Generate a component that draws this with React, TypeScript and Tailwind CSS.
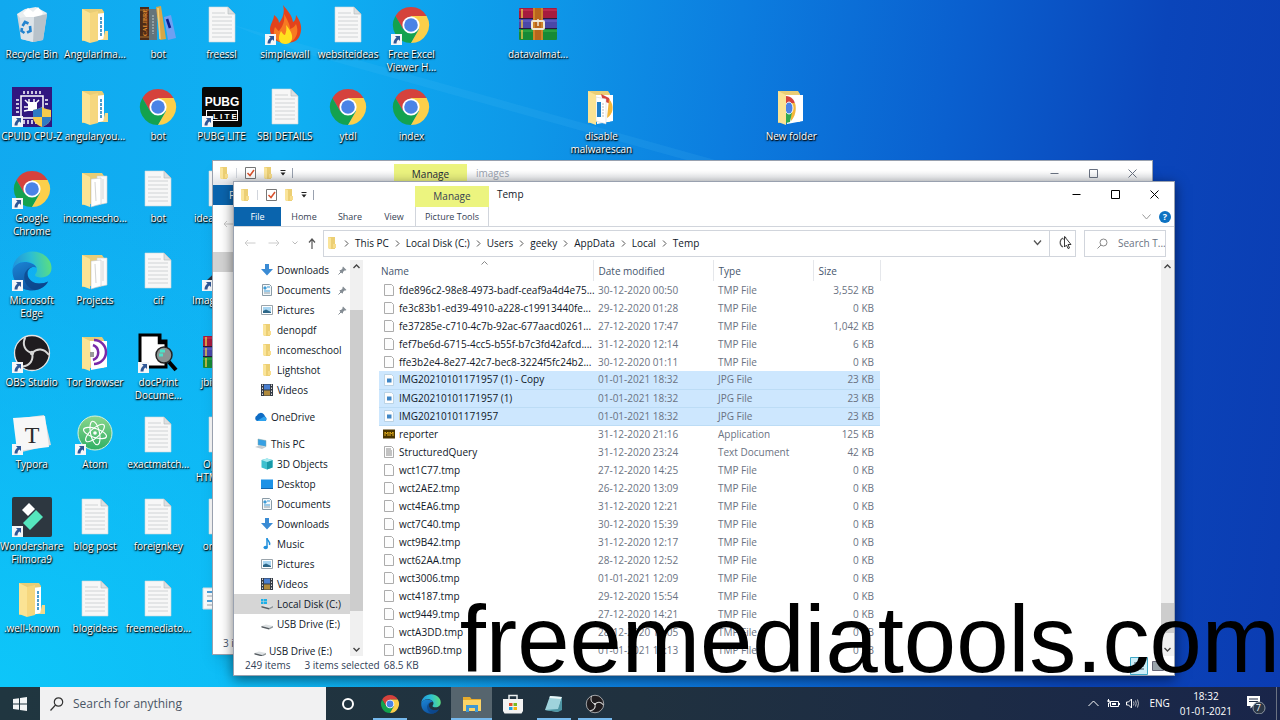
import React from 'react';
import clsx from 'clsx';

type IconProps = { className?: string };

/* ---------- app logos ---------- */

const ChromeIcon: React.FC<IconProps> = ({ className = 'size-10' }) => (
  <svg viewBox="0 0 40 40" className={className}>
    <path d="M4.4 11A18 18 0 0 1 35.6 11H20L12.2 24.5Z" fill="#d5423c" />
    <path d="M4.4 11A18 18 0 0 0 20 38L27.8 24.5H12.2Z" fill="#13a24f" />
    <path d="M35.6 11A18 18 0 0 1 20 38L27.8 24.5L20 11Z" fill="#fccf4a" />
    <circle cx="20" cy="20" r="8.6" fill="#fff" />
    <circle cx="20" cy="20" r="6.8" fill="#4b83e6" />
  </svg>
);

const EdgeIcon: React.FC<IconProps> = ({ className = 'size-10' }) => (
  <svg viewBox="0 0 40 40" className={className}>
    <defs>
      <linearGradient id="edgeTop" x1="0" y1="0.4" x2="1" y2="0.3">
        <stop offset="0" stopColor="#1f93dc" />
        <stop offset="0.5" stopColor="#2cbfd3" />
        <stop offset="1" stopColor="#5fe07a" />
      </linearGradient>
      <linearGradient id="edgeBase" x1="0" y1="0" x2="0.6" y2="1">
        <stop offset="0" stopColor="#1c86d6" />
        <stop offset="1" stopColor="#0d4f9c" />
      </linearGradient>
    </defs>
    <path d="M0.5 19C1 8 10 0.5 20.5 0.5C31 0.5 39.5 8 39.5 17C39.5 23 35 26.5 29.5 26.5C25.5 26.5 23 25.5 23 24C23 22.8 25 22 25 18.5C25 14.5 20 10.5 13.5 10.5C7 10.5 2 14 0.5 19Z" fill="url(#edgeTop)" />
    <path d="M0.5 19C2 14 7 11 12.5 11C18 11 23.5 13.5 24.5 17C22 14.5 15.5 17 15.5 22.5C15.5 28 20.5 32.5 27 32.5C31 32.5 34 31.5 36 30.5C33 36 27 39.5 20 39.5C9 39.5 0 31 0.5 19Z" fill="url(#edgeBase)" />
    <path d="M15.5 22.5C15.5 28 20.5 32.5 27 32.5C31 32.5 34 31.5 36 30.5C34 35 29 38.5 23 39.3C15 37 11 30 12.5 23.5C13.5 19.5 17 16.5 20.5 15.8C17.5 17 15.5 19 15.5 22.5Z" fill="#0b4386" opacity="0.7" />
  </svg>
);

const ObsIcon: React.FC<IconProps> = ({ className = 'size-10' }) => (
  <svg viewBox="0 0 40 40" className={className}>
    <circle cx="20" cy="20" r="17.5" fill="#1f1c1f" stroke="#e4e4e4" strokeWidth="1.3" />
    <g fill="none" stroke="#d8d8d8" strokeWidth="2" strokeLinecap="round">
      <path d="M20 20C13 18 10 12 13 5" />
      <path d="M20 20C13 18 10 12 13 5" transform="rotate(120 20 20)" />
      <path d="M20 20C13 18 10 12 13 5" transform="rotate(240 20 20)" />
    </g>
    <circle cx="20" cy="20" r="2.2" fill="#d8d8d8" />
  </svg>
);

const RecycleBinIcon = () => (
  <svg viewBox="0 0 40 40" className="size-10">
    <path d="M5 9L35 9L31 35L21 37L9 34Z" fill="#cfd6dc" />
    <path d="M5 9L13 4L24 2L35 8L33 13L22 12L8 13Z" fill="#e9edef" />
    <path d="M11 8L16 3L21 7L26 2L31 8L28 12L14 12Z" fill="#fff" />
    <path d="M22 12L35 9L31 35L21 37Z" fill="#b8c2ca" />
    <path d="M8 13L22 12L21 37L9 34Z" fill="#dde4e9" />
    <g fill="none" stroke="#2384cf" strokeWidth="2.6">
      <path d="M10.5 21L13 17L16.5 18.5" />
      <path d="M18 21L18.5 26L15 27.5" />
      <path d="M12.5 28L9.5 26L10 23" />
    </g>
  </svg>
);

const CalibreIcon = () => (
  <svg viewBox="0 0 40 40" className="size-10">
    <path d="M2 2H11V35H2Z" fill="#4d2b18" />
    <path d="M2 5H11M2 32H11" stroke="#a9712d" />
    <text transform="translate(9 31) rotate(-90)" fontSize="6" fontWeight="700" fill="#e89030" className="font-['Liberation_Serif',serif]">CALIBRE</text>
    <path d="M11 4H19V35H11Z" fill="#64747b" />
    <path d="M15 10V29" stroke="#b9c8cc" strokeDasharray="2 1" />
    <path d="M18 2L23 1L28 34L22 35Z" fill="#d8a747" />
    <path d="M20 3L22 34" stroke="#f1cf7e" strokeWidth="1.5" />
    <path d="M26 12L33 10L38 33L30 35Z" fill="#6fa0f2" />
    <path d="M29 14L32 23" stroke="#0a1f8f" strokeWidth="2.6" />
  </svg>
);

const FlameIcon = () => (
  <svg viewBox="0 0 40 40" className="size-10">
    <path d="M18 0C22 5 27 10 28 17C30 16 31 13 31 10C35 16 38 22 35 30C33 36 28 38 21 38C11 38 5 32 5 24C5 19 9 15 9 10C12 12 14 15 14 18C18 13 20 7 18 0Z" fill="#e2431c" />
    <path d="M19 9C23 16 25 20 25 24C28 23 30 21 31 19C34 26 32 34 25 37H15C8 33 8 27 10 22C12 24 13 26 14 26C18 21 20 16 19 9Z" fill="#f77a22" />
    <path d="M21 20C25 25 28 29 27 34C26 38 23 39 20 39C16 39 14 36 14 33C14 30 15 28 16 26C18 29 19 30 20 30C21 27 22 24 21 20Z" fill="#ffe11f" />
  </svg>
);

const CpuzIcon = () => (
  <svg viewBox="0 0 40 40" className="size-10">
    <path d="M0 0H40V40H0Z" fill="#31177f" />
    <g stroke="#fff" fill="none" strokeWidth="1.5">
      <path d="M9 9H31V31H9Z" />
      <path d="M12 4V7M16 4V7M20 4V7M24 4V7M28 4V7M4 13H7M4 17H7M4 21H7M4 25H7M33 13H36M33 17H36M12 33V37M16 33V37M20 33V37M24 33V37" />
      <path d="M13 13L17 17M17 12V16M22 12V16M12 20H16M12 24L17 23M27 13L24 16" />
    </g>
    <path d="M16 15H25V24H16Z" fill="#fff" />
    <path d="M30 20C33 22 36 22 39 23V30C39 35 35 38 30 40C25 38 21 35 21 30V23C24 22 27 22 30 20Z" fill="#f6cb4d" />
    <path d="M30 20V30H21V23C24 22 27 22 30 20ZM30 30H39C39 35 35 38 30 40Z" fill="#2f7bc4" />
  </svg>
);

const PubgIcon = () => (
  <svg viewBox="0 0 40 40" className="size-10">
    <rect width="40" height="40" rx="2" fill="#080808" />
    <g fill="#fff" fontWeight="700" textAnchor="middle" className="font-['Liberation_Sans',sans-serif]">
      <text x="20" y="19" fontSize="12">PUBG</text>
      <text x="23" y="32" fontSize="8">L I T E</text>
    </g>
    <rect x="4.5" y="23.5" width="31" height="10" fill="none" stroke="#fff" />
  </svg>
);

const WinrarIcon = () => (
  <svg viewBox="0 0 40 40" className="size-10">
    <rect x="1" y="3" width="38" height="11" rx="1" fill="#a61b3e" />
    <rect x="1" y="14" width="38" height="10" rx="1" fill="#4a48a8" />
    <rect x="1" y="24" width="38" height="11" rx="1" fill="#178a35" />
    <path d="M1 5H39" stroke="#d03a5c" />
    <path d="M1 13.5H39M1 23.5H39" stroke="#2a1a3a" />
    <path d="M1 16H39" stroke="#6c6bd0" />
    <path d="M1 26H39" stroke="#3fb84c" />
    <path d="M4 4V13M4 15V23M4 25V34" stroke="#e8c24a" strokeWidth="1.5" />
    <path d="M15 3H25V35H15Z" fill="#b9661c" />
    <path d="M16 3V35M24 3V35" stroke="#d8902f" strokeWidth="1.5" />
    <rect x="14" y="16" width="12" height="8" rx="1" fill="none" stroke="#f0ead6" strokeWidth="2" />
    <path d="M20 14V21" stroke="#f0ead6" strokeWidth="1.5" />
  </svg>
);

const TyporaIcon = () => (
  <svg viewBox="0 0 40 40" className="size-10">
    <path d="M2 4L32 0L39 30L10 37Z" fill="#dadada" />
    <path d="M1 3L33 1L37 32L5 36Z" fill="#f7f7f7" />
    <text x="20" y="28" textAnchor="middle" fontSize="24" fill="#2b2b2b" className="font-['Liberation_Serif',serif]">T</text>
  </svg>
);

const AtomIcon = () => (
  <svg viewBox="0 0 40 40" className="size-10">
    <defs>
      <linearGradient id="atomBg" x1="0" y1="0" x2="0" y2="1">
        <stop offset="0" stopColor="#8ad68c" />
        <stop offset="1" stopColor="#2fb064" />
      </linearGradient>
    </defs>
    <circle cx="20" cy="18" r="17" fill="url(#atomBg)" stroke="#d7f3dc" />
    <g fill="none" stroke="#fff" strokeWidth="1.1">
      <ellipse cx="20" cy="18" rx="4.5" ry="12" transform="rotate(-12 20 18)" />
      <ellipse cx="20" cy="18" rx="4.5" ry="12" transform="rotate(48 20 18)" />
      <ellipse cx="20" cy="18" rx="4.5" ry="12" transform="rotate(108 20 18)" />
    </g>
    <circle cx="20" cy="18" r="1.8" fill="#fff" />
  </svg>
);

const FilmoraIcon = () => (
  <svg viewBox="0 0 40 40" className="size-10">
    <rect width="40" height="40" rx="2" fill="#2d3740" />
    <path d="M17 6L23 12L16 19L10 13Z" fill="#fff" />
    <path d="M24 13L31 20L18 33L11 26Z" fill="#55e6bd" />
  </svg>
);

const DocPrintIcon = () => (
  <svg viewBox="0 0 40 40" className="size-10">
    <path d="M2 2H22V8H28V34H2Z" fill="#fff" stroke="#000" strokeWidth="3" />
    <path d="M21 3V10H28" fill="none" stroke="#000" strokeWidth="2.5" />
    <circle cx="26" cy="22" r="8" fill="#8b9494" stroke="#222" strokeWidth="1.5" />
    <path d="M22 18H27M21 22H25" stroke="#4fe0c8" strokeWidth="3" />
    <path d="M31 29L38 37" stroke="#000" strokeWidth="4" />
  </svg>
);

const PictureFileIcon = () => (
  <svg viewBox="0 0 40 40" className="size-10">
    <path d="M1 9H20V30H1Z" fill="#fbfbfb" stroke="#d3dde3" />
    <path d="M5 13H10M5 22H10M13 22H18" stroke="#4f9fd8" strokeWidth="2" />
    <path d="M5 17H16M5 26H16" stroke="#9aa5ab" />
  </svg>
);

const ImageToolIcon = () => (
  <svg viewBox="0 0 40 40" className="size-10">
    <path d="M20 15L40 30H4Z" fill="#2a3440" />
  </svg>
);

/* ---------- files and folders ---------- */

const TextFileIcon = () => (
  <svg viewBox="0 0 40 40" className="size-10">
    <path d="M7 2H26L33 9V37H7Z" fill="#f7f7f7" stroke="#cfd8dc" strokeWidth="0.6" />
    <path d="M26 2V9H33Z" fill="#dcdfe1" stroke="#b3b8bb" strokeWidth="0.6" />
    <path d="M10 8H23M10 12H30M10 16H30M10 20H30M10 24H30M10 28H30M10 32H30" stroke="#d0d3d5" />
  </svg>
);

const FolderIcon: React.FC<{ content?: React.ReactNode; full?: boolean }> = ({ content, full }) => (
  <svg viewBox="0 0 40 40" className="size-10">
    <path d="M7 4H27L29 7V35H12L7 36Z" fill="#e9cd76" />
    {content ?? <path d="M20 9L29 8V34L20 36Z" fill="#fff" />}
    <path d="M7 4L15 8V38L7 35Z" fill="#fbe394" />
    {full && (
      <>
        <path d="M15 8L23 6V36L15 38Z" fill="#f6d77e" />
        <path d="M26 12V32" stroke="#4c9ccc" strokeWidth="2" strokeDasharray="3 1" />
        <path d="M30 26H33V35H28Z" fill="#f3d98a" />
      </>
    )}
  </svg>
);

const PagesInFolder = (
  <>
    <path d="M22 7L32 7V34L22 36Z" fill="#fafafa" stroke="#d0d0d0" strokeWidth="0.6" />
    <path d="M16 10L26 9V35L16 38Z" fill="#fff" stroke="#c5c5c5" strokeWidth="0.6" />
    <path d="M20 13L21 32M28 10V30" stroke="#d5d5d5" />
  </>
);

const TorInFolder = (
  <>
    <path d="M15 8H32V34L16 37Z" fill="#fff" />
    <path d="M19 7A12 12 0 0 1 19 31M18 12A8 8 0 0 1 18 27" fill="none" stroke="#7a2aa8" strokeWidth="2.5" />
    <path d="M15 19H19V24H15Z" fill="#999" />
  </>
);

const ChromeInFolder = (
  <>
    <path d="M15 8H32V34L16 37Z" fill="#fff" />
    <path d="M15 9C20 9 24 13 24 18H15Z" fill="#d5423c" />
    <path d="M19 16H24C26 22 24 30 20 34Z" fill="#f4b73a" />
    <path d="M15 24L21 25L19 35L15 36Z" fill="#2fa84f" />
    <ellipse cx="18" cy="21" rx="4" ry="6" fill="#4b83e6" stroke="#fff" />
  </>
);

const ScanInFolder = (
  <>
    <path d="M15 8H32V34L16 37Z" fill="#fff" />
    <path d="M20 7L28 11L30 17L22 14Z" fill="#d5423c" />
    <path d="M28 12C34 18 32 28 26 31Z" fill="#f4b73a" />
    <path d="M15 10L25 12V37L15 34Z" fill="#fff" stroke="#ccc" strokeWidth="0.5" />
    <path d="M16 15H20V30H16Z" fill="#1e7fc9" />
    <path d="M22 16V30" stroke="#bbb" strokeDasharray="2 1" />
  </>
);

const SmallFolder: React.FC<IconProps> = ({ className }) => (
  <svg viewBox="0 0 12 14" className={clsx('h-3.5 w-3 shrink-0', className)}>
    <path d="M2 1H9V13H4L2 12Z" fill="#eccf74" />
    <path d="M2 1L5 2V13L2 12Z" fill="#fae49a" />
    <path d="M7 8H10V12H7Z" fill="#f7dc8b" />
  </svg>
);

/* ---------- desktop ---------- */

type Shortcut = { col: number; row: number; label: string; icon: React.ReactNode; link?: boolean };

const shortcuts: Shortcut[] = [
  { col: 1, row: 1, label: 'Recycle Bin', icon: <RecycleBinIcon /> },
  { col: 2, row: 1, label: 'AngularIma...', icon: <FolderIcon full /> },
  { col: 3, row: 1, label: 'bot', icon: <CalibreIcon /> },
  { col: 4, row: 1, label: 'freessl', icon: <TextFileIcon /> },
  { col: 5, row: 1, label: 'simplewall', icon: <FlameIcon />, link: true },
  { col: 6, row: 1, label: 'websiteideas', icon: <TextFileIcon /> },
  { col: 7, row: 1, label: 'Free Excel\nViewer H...', icon: <ChromeIcon />, link: true },
  { col: 9, row: 1, label: 'datavalmat...', icon: <WinrarIcon /> },
  { col: 1, row: 2, label: 'CPUID CPU-Z', icon: <CpuzIcon />, link: true },
  { col: 2, row: 2, label: 'angularyou...', icon: <FolderIcon full /> },
  { col: 3, row: 2, label: 'bot', icon: <ChromeIcon /> },
  { col: 4, row: 2, label: 'PUBG LITE', icon: <PubgIcon />, link: true },
  { col: 5, row: 2, label: 'SBI DETAILS', icon: <TextFileIcon /> },
  { col: 6, row: 2, label: 'ytdl', icon: <ChromeIcon /> },
  { col: 7, row: 2, label: 'index', icon: <ChromeIcon /> },
  { col: 10, row: 2, label: 'disable\nmalwarescan', icon: <FolderIcon content={ScanInFolder} /> },
  { col: 13, row: 2, label: 'New folder', icon: <FolderIcon content={ChromeInFolder} /> },
  { col: 1, row: 3, label: 'Google\nChrome', icon: <ChromeIcon />, link: true },
  { col: 2, row: 3, label: 'incomescho...', icon: <FolderIcon content={PagesInFolder} /> },
  { col: 3, row: 3, label: 'bot', icon: <TextFileIcon /> },
  { col: 4, row: 3, label: 'ideas2021 x', icon: <TextFileIcon /> },
  { col: 1, row: 4, label: 'Microsoft\nEdge', icon: <EdgeIcon />, link: true },
  { col: 2, row: 4, label: 'Projects', icon: <FolderIcon content={PagesInFolder} /> },
  { col: 3, row: 4, label: 'cif', icon: <TextFileIcon /> },
  { col: 4, row: 4, label: 'Image To P...\nDoc', icon: <ImageToolIcon />, link: true },
  { col: 1, row: 5, label: 'OBS Studio', icon: <ObsIcon />, link: true },
  { col: 2, row: 5, label: 'Tor Browser', icon: <FolderIcon content={TorInFolder} /> },
  { col: 3, row: 5, label: 'docPrint\nDocume...', icon: <DocPrintIcon />, link: true },
  { col: 4, row: 5, label: 'jbi-codes', icon: <WinrarIcon /> },
  { col: 1, row: 6, label: 'Typora', icon: <TyporaIcon />, link: true },
  { col: 2, row: 6, label: 'Atom', icon: <AtomIcon />, link: true },
  { col: 3, row: 6, label: 'exactmatch...', icon: <TextFileIcon /> },
  { col: 4, row: 6, label: 'Open in\nHTML docs', icon: <TextFileIcon /> },
  { col: 1, row: 7, label: 'Wondershare\nFilmora9', icon: <FilmoraIcon />, link: true },
  { col: 2, row: 7, label: 'blog post', icon: <TextFileIcon /> },
  { col: 3, row: 7, label: 'foreignkey', icon: <TextFileIcon /> },
  { col: 4, row: 7, label: 'on page', icon: <TextFileIcon /> },
  { col: 1, row: 8, label: '.well-known', icon: <FolderIcon full /> },
  { col: 2, row: 8, label: 'blogideas', icon: <TextFileIcon /> },
  { col: 3, row: 8, label: 'freemediato...', icon: <TextFileIcon /> },
  { col: 4, row: 8, label: '', icon: <PictureFileIcon /> },
];

const ShortcutArrow = () => (
  <svg viewBox="0 0 11 11" className="absolute bottom-0 left-0 size-[11px]">
    <path d="M0 0H11V11H0Z" fill="#f4f6f8" />
    <path d="M4 2H9V7L7.5 5.5C6 6.5 5.5 8 5.5 9.5H2.5C2.5 7 3.5 5 5.5 3.7Z" fill="#2f5796" />
  </svg>
);

const DesktopIcons = () => (
  <div className="mr-3.5 grid auto-rows-[82px] grid-cols-20">
    {shortcuts.map(({ col, row, label, icon, link }) => (
      <button
        key={`${col}-${row}`}
        type="button"
        aria-label={label || 'Screenshot'}
        className="flex flex-col items-center pt-[5px]"
        style={{ gridColumn: col, gridRow: row }}
      >
        <span className="relative">
          {icon}
          {link && <ShortcutArrow />}
        </span>
        <span className="mt-[3px] text-center text-[10px] leading-[13px] whitespace-pre text-white [text-shadow:1px_1px_1px_#000,0_1px_2px_#000]">
          {label}
        </span>
      </button>
    ))}
  </div>
);

/* ---------- explorer chrome ---------- */

const QuickAccess = () => (
  <div className="flex items-center gap-1.5 pl-[5px]">
    <SmallFolder />
    <span className="h-2.5 w-px bg-gray-300" />
    <svg viewBox="0 0 11 12" className="ml-0.5 h-3 w-[11px]">
      <path d="M0.5 0.5H10.5V11.5H0.5Z" fill="#fff" stroke="#777" />
      <path d="M2.5 6L5 8.5L9 3" fill="none" stroke="#d9512c" strokeWidth="1.5" />
    </svg>
    <SmallFolder />
    <svg viewBox="0 0 6 6" className="size-1.5">
      <path d="M0.5 0.5H5.5" stroke="#222" />
      <path d="M0.5 2.5H5.5L3 5.5Z" fill="#222" />
    </svg>
    <span className="h-2.5 w-px bg-gray-400" />
  </div>
);

const WindowButtons: React.FC<IconProps> = ({ className }) => (
  <div className={clsx('flex items-center', className)}>
    <button type="button" aria-label="Minimize" className="flex w-[39px] justify-center">
      <svg viewBox="0 0 9 9" className="size-[9px]"><path d="M0.5 4.5H8.5" stroke="currentColor" /></svg>
    </button>
    <button type="button" aria-label="Maximize" className="flex w-[39px] justify-center">
      <svg viewBox="0 0 9 9" className="size-[9px]"><path d="M0.5 0.5H8.5V8.5H0.5Z" fill="none" stroke="currentColor" /></svg>
    </button>
    <button type="button" aria-label="Close" className="flex w-[39px] justify-center">
      <svg viewBox="0 0 9 9" className="size-[9px]"><path d="M0.5 0.5L8.5 8.5M8.5 0.5L0.5 8.5" stroke="currentColor" /></svg>
    </button>
  </div>
);

const BackWindow = () => (
  <section className="absolute top-[160px] right-[127px] bottom-8 left-[212px] flex flex-col border border-gray-400 bg-white shadow-lg">
    <header className="flex h-6 items-center bg-linear-to-b from-white from-40% to-gray-200 to-90%">
      <QuickAccess />
      <div className="mt-[3px] ml-[101px] flex h-[21px] w-[73px] items-center justify-center bg-[#ecf47f] text-[10px] text-gray-800">Manage</div>
      <h2 className="ml-[9px] flex-1 text-[10px] text-gray-400">images</h2>
      <WindowButtons className="text-gray-500" />
    </header>
    <div className="flex h-5 w-12 items-center bg-[#0a64ad] pl-4 text-[10px] text-white">File</div>
    <div className="flex h-[47px] items-center pb-2.5 pl-2.5">
      <svg viewBox="0 0 12 8" className="h-2 w-3"><path d="M11.5 4H1M4 1L1 4L4 7" fill="none" stroke="#c8c8c8" /></svg>
    </div>
    <div className="h-5 w-12 bg-[#d3d3d3]" />
    <footer className="mt-auto pb-1 pl-2.5 text-[10px] leading-[13px] text-slate-600">3 items</footer>
  </section>
);

const RibbonTabs = () => (
  <nav className="flex h-5 border-b border-gray-300 text-[9px] text-gray-700">
    <button type="button" className="w-[47px] bg-[#0a64ad] text-white">File</button>
    <button type="button" className="w-[46px]">Home</button>
    <button type="button" className="w-[46px]">Share</button>
    <button type="button" className="w-[42px]">View</button>
    <button type="button" className="w-[74px] border-x border-gray-300">Picture Tools</button>
    <div className="ml-auto flex items-center gap-2 pr-[3px]">
      <svg viewBox="0 0 9 6" className="h-1.5 w-[9px]"><path d="M0.5 0.5L4.5 5L8.5 0.5" fill="none" stroke="#999" /></svg>
      <button type="button" aria-label="Help" className="flex size-3 items-center justify-center rounded-full bg-[#0d72c2] text-[9px] font-bold text-white">?</button>
    </div>
  </nav>
);

const crumbs = ['This PC', 'Local Disk (C:)', 'Users', 'geeky', 'AppData', 'Local', 'Temp'];

const AddressBar = () => (
  <div className="flex h-8 items-center pr-2">
    <div className="flex w-[89px] items-center gap-3 pl-2.5">
      <svg viewBox="0 0 12 8" className="h-2 w-3"><path d="M11.5 4H1M4 1L1 4L4 7" fill="none" stroke="#ccc" /></svg>
      <svg viewBox="0 0 12 8" className="h-2 w-3"><path d="M0.5 4H11M8 1L11 4L8 7" fill="none" stroke="#ccc" /></svg>
      <svg viewBox="0 0 6 4" className="h-1 w-1.5"><path d="M0.5 0.5L3 3L5.5 0.5" fill="none" stroke="#bbb" /></svg>
      <svg viewBox="0 0 8 11" className="-ml-0.5 h-[11px] w-2"><path d="M4 11V1M1 4.5L4 1L7 4.5" fill="none" stroke="#555" strokeWidth="1.2" /></svg>
    </div>
    <div className="flex h-[27px] flex-1 items-center border border-gray-300 pl-0.5">
      <SmallFolder />
      <ol className="flex items-center text-[10px] text-gray-900">
        {crumbs.map((crumb) => (
          <li key={crumb} className="flex items-center">
            <svg viewBox="0 0 5 7" className="mx-1.5 h-[7px] w-[5px]"><path d="M1 0.5L4 3.5L1 6.5" fill="none" stroke="#555" /></svg>
            <a href="#">{crumb}</a>
          </li>
        ))}
      </ol>
      <svg viewBox="0 0 9 6" className="mr-[7px] ml-auto h-1.5 w-[9px]"><path d="M1 0.5L4.5 4.5L8 0.5" fill="none" stroke="#555" strokeWidth="1.3" /></svg>
    </div>
    <button type="button" aria-label="Refresh" className="flex h-[27px] w-[26px] items-center justify-center border border-l-0 border-gray-300">
      <svg viewBox="0 0 14 14" className="ml-1 size-3.5">
        <path d="M5 2A5 5 0 0 0 5 11M8 1L6 3L8 4" fill="none" stroke="#555" strokeWidth="1.2" />
        <path d="M6.5 0.5V11L8.5 9L10 12.5L11.5 12L10 8.5H13Z" fill="#fff" stroke="#222" strokeWidth="0.9" />
      </svg>
    </button>
    <div className="ml-2 flex h-[27px] w-[82px] items-center gap-2.5 border border-gray-300 pl-3">
      <svg viewBox="0 0 11 11" className="size-[11px] shrink-0">
        <circle cx="6.5" cy="4.5" r="3.5" fill="none" stroke="#888" />
        <path d="M4 7L0.5 10.5" stroke="#888" />
      </svg>
      <input aria-label="Search Temp" placeholder="Search T..." className="w-full min-w-0 text-[10px] outline-none placeholder:text-gray-500" />
    </div>
  </div>
);

/* ---------- navigation pane ---------- */

const DownloadsGlyph = () => (
  <svg viewBox="0 0 12 12" className="size-3"><path d="M4 0H8V5H12L6 11.5L0 5H4Z" fill="#3a8bd4" /></svg>
);
const DocumentsGlyph = () => (
  <svg viewBox="0 0 12 12" className="size-3">
    <path d="M1.5 0.5H8.5L10.5 2.5V11.5H1.5Z" fill="#f4f8fa" stroke="#8a9ba6" />
    <path d="M3 3H5V5H3ZM6 3H9M3 7H9" stroke="#3f9bd6" fill="#3f9bd6" />
    <path d="M3 9H9" stroke="#8a9ba6" />
  </svg>
);
const PicturesGlyph = () => (
  <svg viewBox="0 0 12 12" className="size-3">
    <path d="M0.5 1.5H11.5V10.5H0.5Z" fill="#fff" stroke="#9aa4ab" />
    <path d="M2 3H10V9H2Z" fill="#a9d6f2" />
    <path d="M2 7L5 5.5L10 8V9H2Z" fill="#2d6788" />
  </svg>
);
const VideosGlyph = () => (
  <svg viewBox="0 0 12 12" className="size-3">
    <path d="M0 0H12V12H0Z" fill="#333a45" />
    <path d="M3 0.5H9V5.5H3Z" fill="#4a7fd0" />
    <path d="M3 6.5H9V11.5H3Z" fill="#b08a3c" />
    <path d="M1.5 0.5V12M10.5 0.5V12" stroke="#ddd" strokeDasharray="1.5 1.5" />
  </svg>
);
const CloudGlyph = () => (
  <svg viewBox="0 0 14 12" className="h-3 w-3.5">
    <path d="M3 10A3 3 0 0 1 3 4.5A4 4 0 0 1 10 3.5L11.5 6A2.5 2.5 0 0 1 11.5 10Z" fill="#0f6cc4" />
    <path d="M3 10L10 5.5A2.7 2.7 0 0 1 11.5 10Z" fill="#2da2ee" />
  </svg>
);
const PcGlyph = () => (
  <svg viewBox="0 0 14 12" className="h-3 w-3.5">
    <path d="M4 1L12 2.5V8.5L4 7Z" fill="#36a0e4" stroke="#8aa" strokeWidth="0.5" />
    <path d="M1 9L5 7.5L12 9L8 11Z" fill="#c5ccd1" />
  </svg>
);
const CubeGlyph = () => (
  <svg viewBox="0 0 12 12" className="size-3">
    <path d="M0.5 2L6 0.5L11.5 2V9.5L6 11.5L0.5 9.5Z" fill="#3cc0cf" />
    <path d="M6 4L11.5 2V9.5L6 11.5Z" fill="#189aa8" />
    <path d="M0.5 2L6 0.5L11.5 2L6 4Z" fill="#a8eaf0" />
  </svg>
);
const DesktopGlyph = () => (
  <svg viewBox="0 0 12 12" className="size-3"><path d="M0 1.5H12V10H0Z" fill="#1d92e6" /><path d="M0 10H12V11H0Z" fill="#1166ae" /></svg>
);
const MusicGlyph = () => (
  <svg viewBox="0 0 12 12" className="size-3">
    <path d="M6 0.5C6.5 3 9.5 3.5 8.5 7" fill="none" stroke="#1f8fdc" strokeWidth="1.5" />
    <path d="M6 0V9" stroke="#1f8fdc" strokeWidth="1.5" />
    <ellipse cx="4.7" cy="9.5" rx="2.2" ry="1.8" fill="#1f8fdc" />
  </svg>
);
const DriveGlyph: React.FC<{ system?: boolean }> = ({ system }) => (
  <svg viewBox="0 0 12 12" className="size-3">
    {system && <path d="M0 1H2.5V3.5H0ZM3 1H6V3.5H3ZM0 4H2.5V6H0ZM3 4H6V6H3Z" fill="#1bb0e8" />}
    <path d="M0.5 8L5 6.5L12 8L8 10Z" fill="#dde1e3" />
    <path d="M0.5 8L8 10V11.5L0.5 9.5Z" fill="#555c61" />
    <path d="M8 10L12 8V9.5L8 11.5Z" fill="#8d9498" />
  </svg>
);
const PinGlyph = () => (
  <svg viewBox="0 0 9 9" className="mr-[3px] ml-auto size-[9px]">
    <path d="M5 0.5L8.5 4L7.5 4.5L6.5 4.5L5 6L5 7.5L3.5 7L2 5.5L1.5 4L3 4L4.5 2.5L4.5 1.5Z" fill="#858d94" />
    <path d="M3 6L0.5 8.5" stroke="#858d94" />
  </svg>
);

type NavItem = { label: string; icon: React.ReactNode; root?: boolean; pinned?: boolean; active?: boolean };

const navItems: NavItem[] = [
  { label: 'Downloads', icon: <DownloadsGlyph />, pinned: true },
  { label: 'Documents', icon: <DocumentsGlyph />, pinned: true },
  { label: 'Pictures', icon: <PicturesGlyph />, pinned: true },
  { label: 'denopdf', icon: <SmallFolder /> },
  { label: 'incomeschool', icon: <SmallFolder /> },
  { label: 'Lightshot', icon: <SmallFolder /> },
  { label: 'Videos', icon: <VideosGlyph /> },
  { label: 'OneDrive', icon: <CloudGlyph />, root: true },
  { label: 'This PC', icon: <PcGlyph />, root: true },
  { label: '3D Objects', icon: <CubeGlyph /> },
  { label: 'Desktop', icon: <DesktopGlyph /> },
  { label: 'Documents', icon: <DocumentsGlyph /> },
  { label: 'Downloads', icon: <DownloadsGlyph /> },
  { label: 'Music', icon: <MusicGlyph /> },
  { label: 'Pictures', icon: <PicturesGlyph /> },
  { label: 'Videos', icon: <VideosGlyph /> },
  { label: 'Local Disk (C:)', icon: <DriveGlyph system />, active: true },
  { label: 'USB Drive (E:)', icon: <DriveGlyph /> },
  { label: 'USB Drive (E:)', icon: <DriveGlyph />, root: true },
];

const NavPane = () => (
  <ul className="w-[116px] shrink-0 overflow-hidden text-[10px] text-gray-900">
    {navItems.map(({ label, icon, root, pinned, active }, i) => (
      <li
        key={i}
        className={clsx(
          'flex h-5 items-center whitespace-nowrap',
          root ? 'mt-[7px] gap-[3px] pl-5' : 'gap-1 pl-[27px]',
          active && 'bg-[#d6d6d6]'
        )}
      >
        {icon}
        <span>{label}</span>
        {pinned && <PinGlyph />}
      </li>
    ))}
  </ul>
);

const Scrollbar: React.FC<{ children: React.ReactNode }> = ({ children }) => (
  <div className="flex w-[13px] shrink-0 flex-col items-center justify-between bg-[#f0f0f0] py-1">
    <svg viewBox="0 0 7 5" className="h-[5px] w-[7px]"><path d="M0.5 4L3.5 1L6.5 4" fill="none" stroke="#444" strokeWidth="1.4" /></svg>
    {children}
    <svg viewBox="0 0 7 5" className="h-[5px] w-[7px]"><path d="M0.5 1L3.5 4L6.5 1" fill="none" stroke="#444" strokeWidth="1.4" /></svg>
  </div>
);

/* ---------- file list ---------- */

type FileRow = { name: string; date: string; type: string; size: string; kind?: 'jpg' | 'app' | 'txt' };

const tmp = (name: string, date: string, size = '0 KB'): FileRow => ({ name, date, type: 'TMP File', size });
const jpg = (name: string): FileRow => ({ name, date: '01-01-2021 18:32', type: 'JPG File', size: '23 KB', kind: 'jpg' });

const files: FileRow[] = [
  tmp('fde896c2-98e8-4973-badf-ceaf9a4d4e75...', '30-12-2020 00:50', '3,552 KB'),
  tmp('fe3c83b1-ed39-4910-a228-c19913440fe...', '29-12-2020 01:28'),
  tmp('fe37285e-c710-4c7b-92ac-677aacd0261...', '27-12-2020 17:47', '1,042 KB'),
  tmp('fef7be6d-6715-4cc5-b55f-b7c3fd42afcd....', '31-12-2020 12:14', '6 KB'),
  tmp('ffe3b2e4-8e27-42c7-bec8-3224f5fc24b2...', '30-12-2020 01:11'),
  jpg('IMG20210101171957 (1) - Copy'),
  jpg('IMG20210101171957 (1)'),
  jpg('IMG20210101171957'),
  { name: 'reporter', date: '31-12-2020 21:16', type: 'Application', size: '125 KB', kind: 'app' },
  { name: 'StructuredQuery', date: '31-12-2020 23:24', type: 'Text Document', size: '42 KB', kind: 'txt' },
  tmp('wct1C77.tmp', '27-12-2020 14:25'),
  tmp('wct2AE2.tmp', '26-12-2020 13:09'),
  tmp('wct4EA6.tmp', '31-12-2020 12:21'),
  tmp('wct7C40.tmp', '30-12-2020 15:39'),
  tmp('wct9B42.tmp', '31-12-2020 12:17'),
  tmp('wct62AA.tmp', '28-12-2020 12:52'),
  tmp('wct3006.tmp', '01-01-2021 12:09'),
  tmp('wct4187.tmp', '29-12-2020 15:54'),
  tmp('wct9449.tmp', '27-12-2020 14:21'),
  tmp('wctA3DD.tmp', '28-12-2020 13:05'),
  tmp('wctB96D.tmp', '01-01-2021 12:13'),
];

const FileGlyph: React.FC<{ kind?: FileRow['kind'] }> = ({ kind }) => {
  if (kind === 'app') {
    return (
      <svg viewBox="0 0 12 12" className="size-3 shrink-0">
        <path d="M0 1.5H12V10.5H0Z" fill="#4a3500" />
        <path d="M2 8V4L3.5 6L5 4V8M7 8V4L8.5 6L10 4V8" fill="none" stroke="#e8b21c" />
      </svg>
    );
  }
  return (
    <svg viewBox="0 0 12 12" className="size-3 shrink-0">
      <path d="M1.5 0.5H8.5L10.5 2.5V11.5H1.5Z" fill="#fdfdfd" stroke={kind === 'jpg' ? '#b5cfe2' : '#a3a3a3'} strokeWidth="0.9" />
      {kind === 'jpg' && <path d="M4 4.5H8.5V8.5H4Z" fill="#3f86c6" />}
      {kind === 'txt' && <path d="M3 3H8M3 5H9M3 7H9M3 9H9" stroke="#888" />}
    </svg>
  );
};

const FileTable = () => (
  <table className="w-[501px] table-fixed text-[10px]">
    <colgroup>
      <col className="w-[214px]" />
      <col className="w-[120px]" />
      <col className="w-[100px]" />
      <col className="w-[67px]" />
    </colgroup>
    <thead>
      <tr className="h-[21px] text-left text-slate-600 [&>th]:border-r [&>th]:border-gray-200 [&>th]:pt-0.5 [&>th]:pb-0 [&>th]:pl-[5px] [&>th]:font-normal">
        <th className="relative">
          <span className="-ml-[3px]">Name</span>
          <svg viewBox="0 0 7 4" className="absolute top-px left-[102px] h-1 w-[7px]"><path d="M0.5 3.5L3.5 0.5L6.5 3.5" fill="none" stroke="#888" /></svg>
        </th>
        <th>Date modified</th>
        <th>Type</th>
        <th>Size</th>
      </tr>
    </thead>
    <tbody>
      {files.map(({ name, date, type, size, kind }) => (
        <tr
          key={name}
          className={clsx(
            'h-[18px] leading-[17px] whitespace-nowrap text-gray-500 [&>td]:py-0',
            kind === 'jpg' && 'border-b border-[#bcdcf5] bg-[#cde7fe]'
          )}
        >
          <td>
            <div className="flex items-center gap-1 pl-1 text-gray-900">
              <FileGlyph kind={kind} />
              {name}
            </div>
          </td>
          <td className="pl-[5px]">{date}</td>
          <td className="pl-[5px]">{type}</td>
          <td className="pr-1.5 text-right">{size}</td>
        </tr>
      ))}
    </tbody>
  </table>
);

const FrontWindow = () => (
  <section className="absolute top-[181px] right-[105px] bottom-[11px] left-[233px] flex flex-col border border-gray-400 bg-white shadow-[0_3px_12px_#0008]">
    <header className="flex h-[25px] items-center">
      <QuickAccess />
      <div className="mt-1 ml-[101px] flex h-[21px] w-[74px] items-center justify-center bg-[#ecf47f] text-[10px] text-gray-700">Manage</div>
      <h1 className="ml-2 flex-1 text-[10px] text-gray-900">Temp</h1>
      <WindowButtons className="text-black" />
    </header>
    <RibbonTabs />
    <AddressBar />
    <div className="mt-px flex min-h-0 flex-1 overflow-hidden">
      <NavPane />
      <Scrollbar>
        <div className="mb-auto mt-[41px] h-[301px] w-full bg-[#cdcdcd]" />
      </Scrollbar>
      <div className="min-w-0 flex-1 overflow-hidden pl-4">
        <FileTable />
      </div>
      <Scrollbar>
        <div className="mt-auto mb-3.5 h-[30px] w-full bg-[#cdcdcd]" />
      </Scrollbar>
    </div>
    <footer className="flex h-[19px] items-center gap-3.5 pl-[11px] text-[10px] text-slate-700">
      <span>249 items</span>
      <span>3 items selected</span>
      <span className="-ml-2.5">68.5 KB</span>
      <div className="mr-2.5 ml-auto flex items-center gap-1">
        <svg viewBox="0 0 18 18" className="size-[18px]">
          <path d="M0.5 0.5H17.5V17.5H0.5Z" fill="#cdeef8" stroke="#3fa9c8" />
          <path d="M4 6H8M4 9H8M4 12H8M10 6H14M10 9H14M10 12H14" stroke="#456" />
        </svg>
        <svg viewBox="0 0 12 10" className="h-2.5 w-3"><path d="M0.5 0.5H11.5V9.5H0.5Z" fill="#9aa4aa" stroke="#667" /></svg>
      </div>
    </footer>
  </section>
);

/* ---------- taskbar ---------- */

const ExplorerIcon = () => (
  <svg viewBox="0 0 20 20" className="size-5">
    <path d="M1 3H8L9.5 5H19V16H1Z" fill="#e7ab2c" />
    <path d="M1 6H19V17H1Z" fill="#fcd467" />
    <path d="M4 11H16V18H13V14H7V18H4Z" fill="#3f98d4" />
  </svg>
);

const StoreIcon = () => (
  <svg viewBox="0 0 20 20" className="size-5">
    <path d="M6 6V1.5H14V6" fill="none" stroke="#e9eef0" strokeWidth="1.5" />
    <path d="M0 5H20V17L18.5 19.5H1.5L0 17Z" fill="#f3f3f3" />
    <path d="M6 9H9.5V12H6Z" fill="#e3502b" />
    <path d="M10.5 9H14V12H10.5Z" fill="#7cb823" />
    <path d="M6 13H9.5V16H6Z" fill="#1ea2e3" />
    <path d="M10.5 13H14V16H10.5Z" fill="#f6b40e" />
  </svg>
);

const NotepadIcon = () => (
  <svg viewBox="0 0 20 20" className="size-5">
    <path d="M6 2L18 3L14 18L1 16Z" fill="#9fd3dc" />
    <path d="M6 2L18 3L17 5L5.5 4Z" fill="#eaf6f7" />
    <path d="M1 16L14 18L18 16L18 3L14 15Z" fill="#4d95a3" />
  </svg>
);

const apps = [
  { name: 'Chrome', icon: <ChromeIcon className="size-5" />, running: true },
  { name: 'Edge', icon: <EdgeIcon className="size-5" /> },
  { name: 'File Explorer', icon: <ExplorerIcon />, running: true, active: true },
  { name: 'Store', icon: <StoreIcon /> },
  { name: 'Notepad', icon: <NotepadIcon />, running: true },
  { name: 'OBS', icon: <ObsIcon className="size-5" />, running: true },
];

const Taskbar = () => (
  <footer className="flex h-[33px] shrink-0 bg-linear-to-r from-[#203640] via-[#20313f] to-[#19254a] text-white">
    <button type="button" aria-label="Start" className="flex w-10 items-center justify-center">
      <svg viewBox="0 0 14 14" className="size-3.5">
        <path d="M0 2L6 1.2V6.5H0ZM7 1L14 0V6.5H7ZM0 7.5H6V12.8L0 12ZM7 7.5H14V14L7 13Z" fill="#f2f4f5" />
      </svg>
    </button>
    <label className="flex w-[286px] items-center gap-[9px] bg-[#f1f1f2] pl-2.5">
      <svg viewBox="0 0 14 14" className="size-3.5 shrink-0">
        <circle cx="8.5" cy="5" r="4.2" fill="none" stroke="#333" strokeWidth="1.2" />
        <path d="M5.5 8L0.5 13.5" stroke="#333" strokeWidth="1.2" />
      </svg>
      <input aria-label="Search" placeholder="Search for anything" className="w-full text-xs outline-none placeholder:text-gray-600" />
    </label>
    <button type="button" aria-label="Cortana" className="flex w-[43px] items-center justify-center">
      <span className="size-3 rounded-full border-2 border-white" />
    </button>
    {apps.map(({ name, icon, running, active }) => (
      <button
        key={name}
        type="button"
        aria-label={name}
        className={clsx('flex w-[41px] flex-col items-center justify-end', active && 'bg-[#56656e]')}
      >
        <span className="mb-1">{icon}</span>
        <span className={clsx('h-0.5', active ? 'w-full' : 'w-[34px]', running && 'bg-[#76b9ed]')} />
      </button>
    ))}
    <div className="ml-auto flex items-center text-[10px]">
      <svg viewBox="0 0 11 7" className="mr-2 h-[7px] w-[11px]"><path d="M0.5 6L5.5 1L10.5 6" fill="none" stroke="#fff" /></svg>
      <svg viewBox="0 0 13 9" className="mr-1.5 h-[9px] w-[13px]">
        <path d="M3.5 2.5H11.5V7.5H3.5Z" fill="none" stroke="#fff" />
        <path d="M5 4H9V6H5ZM12 4H13V6H12Z" fill="#fff" />
        <path d="M1.5 0V3M0 2H3V4H1.5V8" fill="none" stroke="#fff" />
      </svg>
      <svg viewBox="0 0 13 11" className="mr-2.5 h-[11px] w-[13px]">
        <path d="M0.5 4H2.5L5.5 1V10L2.5 7H0.5Z" fill="none" stroke="#fff" />
        <path d="M7.5 3.5Q8.5 5.5 7.5 7.5M9.5 2.5Q11 5.5 9.5 8.5M11.5 1.5Q13.5 5.5 11.5 9.5" fill="none" stroke="#ddd" strokeWidth="0.8" />
      </svg>
      <span className="mr-2.5">ENG</span>
      <time className="mr-3.5 text-center leading-[15px]">
        18:32<br />01-01-2021
      </time>
      <button type="button" aria-label="Notifications" className="relative mr-2.5 size-5">
        <svg viewBox="0 0 20 20" className="size-5">
          <path d="M1 2H14V12H7L4.5 14.5V12H1Z" fill="#fff" />
          <path d="M3 5H12M3 7.5H12" stroke="#1d2b44" />
          <circle cx="13" cy="14" r="6" fill="#2b3747" stroke="#8c959f" />
        </svg>
        <span className="absolute right-[5px] bottom-0 text-[9px] leading-3">7</span>
      </button>
      <span className="mr-[3px] h-[33px] w-px bg-gray-500" />
    </div>
  </footer>
);

export default function App() {
  return (
    <div className="relative flex h-screen flex-col overflow-hidden font-['Open_Sans','Noto_Sans',sans-serif]">
      <main className="relative min-h-0 flex-1 overflow-hidden bg-[linear-gradient(98deg,#11a9ef_0%,#0fb0f3_22%,#0e97e8_40%,#0c7ddf_54%,#0a60cf_70%,#0a45ba_85%,#0b3cb2_100%)]">
        <div className="absolute inset-0 bg-[radial-gradient(ellipse_45%_75%_at_0%_100%,#0dc6f9_0%,#0dc6f900_100%)]" />
        <svg viewBox="0 0 1280 687" preserveAspectRatio="none" className="absolute inset-0 size-full">
          <path d="M230 24L715 160L690 161L300 52Z" fill="#5cc4f7" opacity="0.12" />
        </svg>
        <div className="relative">
          <DesktopIcons />
        </div>
        <BackWindow />
        <FrontWindow />
      </main>
      <Taskbar />
      <p className="pointer-events-none absolute right-0 bottom-[33px] font-['Liberation_Sans',sans-serif] text-[94px] leading-[94px] text-black">
        freemediatools.com
      </p>
    </div>
  );
}
